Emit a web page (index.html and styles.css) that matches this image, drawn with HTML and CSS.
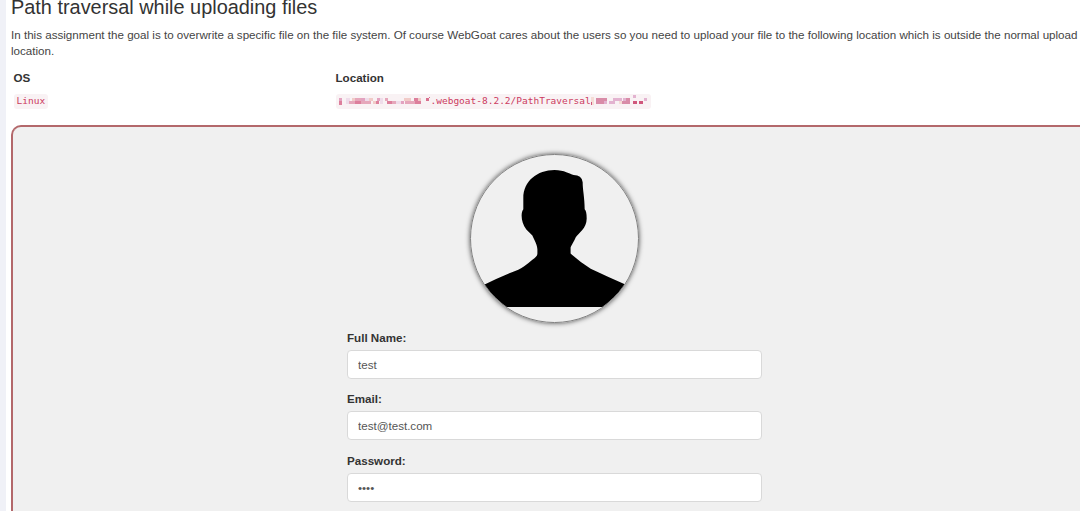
FILE: index.html
```
<!DOCTYPE html>
<html lang="en">
<head>
    <meta charset="UTF-8">
    <meta name="viewport" content="width=device-width, initial-scale=1.0">
    <title>Path traversal</title>
    <link rel="stylesheet" href="styles.css">
</head>
<body>

<main class="lesson">
    <h2>Path traversal while uploading files</h2>
    <p>In this assignment the goal is to overwrite a specific file on the file system. Of course WebGoat cares about the users so you need to upload your file to the following location which is outside the normal upload location.</p>

    <div class="target">
        <div class="target-os">
            <strong>OS</strong>
            <code>Linux</code>
        </div>
        <div class="target-location">
            <strong>Location</strong>
            <code>
                <svg class="mask-start" viewBox="0 0 92 14" shape-rendering="crispEdges">
                    <path fill="#e3a3c0" d="M0 4h3v3h-3zM22 4h4v3h-4zM38 4h3v3h-3zM62 7h3v3h-3z"/>
                    <path fill="#dd7f9c" d="M0 7h3v4h-3zM16 7h6v3h-6zM37 7h3v3h-3zM48 7h6v3h-6zM75 4h4v3h-4zM76 7h6v3h-6z"/>
                    <path fill="#efdcea" d="M7 4h4v6h-4zM26 4h4v3h-4zM41 4h3v6h-3zM57 7h5v3h-5z"/>
                    <path fill="#f1cbc8" d="M13 4h3v3h-3zM30 4h4v3h-4zM34 7h3v3h-3zM65 4h7v3h-7zM79 4h3v3h-3z"/>
                    <path fill="#e6a7bb" d="M10 7h6v3h-6zM16 4h6v3h-6zM22 7h10v3h-10zM46 4h3v3h-3zM53 7h4v3h-4zM66 7h10v3h-10z"/>
                    <path fill="#d96f8e" d="M87 4h3v3h-3zM90 3h1v1h-1z"/>
                </svg><span>.webgoat-8.2.2/PathTraversal</span><svg class="mask-end" viewBox="0 0 57 14" shape-rendering="crispEdges">
                    <path fill="#f5dcd5" d="M0 3h3v8h-3zM28 7h3v3h-3z"/>
                    <path fill="#d0577c" d="M0 8h1v3h-1zM42 7h4v3h-4zM48 7h4v3h-4z"/>
                    <path fill="#d98ca8" d="M5 4h11v3h-11zM5 7h8v3h-8zM31 7h8v3h-8zM35 4h4v3h-4z"/>
                    <path fill="#e3b3d0" d="M13 7h3v3h-3zM18 7h6v3h-6zM22 4h9v3h-9zM32 4h3v3h-3zM42 1h3v3h-3zM53 4h3v3h-3z"/>
                </svg>
            </code>
        </div>
    </div>

    <section class="attack">
        <form class="profile">
            <div class="avatar">
                <svg viewBox="0 0 166 166">
                    <path d="M83 15C66 15 52 26 52 43V54C49 58 50 68 55 74L61 80C63 85 66 89 66 94V98Q66 101 61 104Q53 111 47 114Q29 121 13 129V151H154V129Q136 121 119 113Q109 107 99 98V92C100 89 102 87 104 82C107 77 115 73 115 63Q115 56 113 54C113 42 111 35 111 27Q110 20 102 20C98 19 93 15 83 15Z"/>
                </svg>
            </div>
            <label for="fullName">Full Name:</label>
            <input type="text" id="fullName" value="test">
            <label for="email">Email:</label>
            <input type="text" id="email" value="test@test.com">
            <label for="password">Password:</label>
            <input type="password" id="password" value="test">
        </form>
    </section>
</main>

</body>
</html>
```
FILE: styles.css
```
* {
    box-sizing: border-box;
}

body {
    margin: 0;
    height: 511px;
    overflow: hidden;
    background-color: #ffffff;
    border-left: 6px solid #f0f1f7;
    color: #444444;
    font-family: "Liberation Sans", Arial, sans-serif;
    font-size: 11.61px;
    line-height: 16.5px;
}

.lesson {
    display: flex;
    flex-direction: column;
    height: 511px;
    padding-left: 5px;
}

h2 {
    margin: 0;
    color: #333333;
    font-size: 19.9px;
    font-weight: normal;
    line-height: 14px;
}

p {
    margin: 12.5px 0 0;
}

.target {
    display: flex;
    margin-top: 10.5px;
    padding-left: 2.5px;
}

.target strong {
    display: block;
    color: #333333;
}

.target-os {
    width: 322px;
}

code {
    display: flex;
    align-items: center;
    width: fit-content;
    height: 15px;
    margin-top: 7px;
    padding: 0 3px;
    background-color: #f9f2f4;
    border-radius: 3px;
    color: #cc3a60;
    font-family: "DejaVu Sans Mono", monospace;
    font-size: 9.5px;
}

.mask-start {
    width: 92px;
    height: 14px;
}

.mask-end {
    width: 57px;
    height: 14px;
}

.attack {
    flex: 1;
    min-height: 0;
    margin-top: 16px;
    padding-top: 27px;
    overflow: hidden;
    background-color: #f0f0f0;
    border: 2px solid #b3686b;
    border-right: none;
    border-bottom: none;
    border-radius: 10px 0 0 0;
}

.profile {
    width: 415px;
    margin-left: 334px;
}

.avatar {
    width: 169px;
    height: 169px;
    margin: 0 auto 7.4px;
    border: 1.5px solid #808080;
    border-radius: 50%;
    box-shadow: 0 0 5px rgba(0, 0, 0, 0.7);
    overflow: hidden;
}

.avatar svg {
    display: block;
}

label {
    display: block;
    height: 20px;
    color: #333333;
    font-weight: bold;
}

input {
    display: block;
    width: 100%;
    height: 29px;
    margin-bottom: 12.5px;
    padding: 0 10px;
    background-color: #ffffff;
    border: 1px solid #d9d9d9;
    border-radius: 4px;
    color: #555555;
    font-family: inherit;
    font-size: 11.6px;
}

input:last-child {
    margin-bottom: 0;
}
```
